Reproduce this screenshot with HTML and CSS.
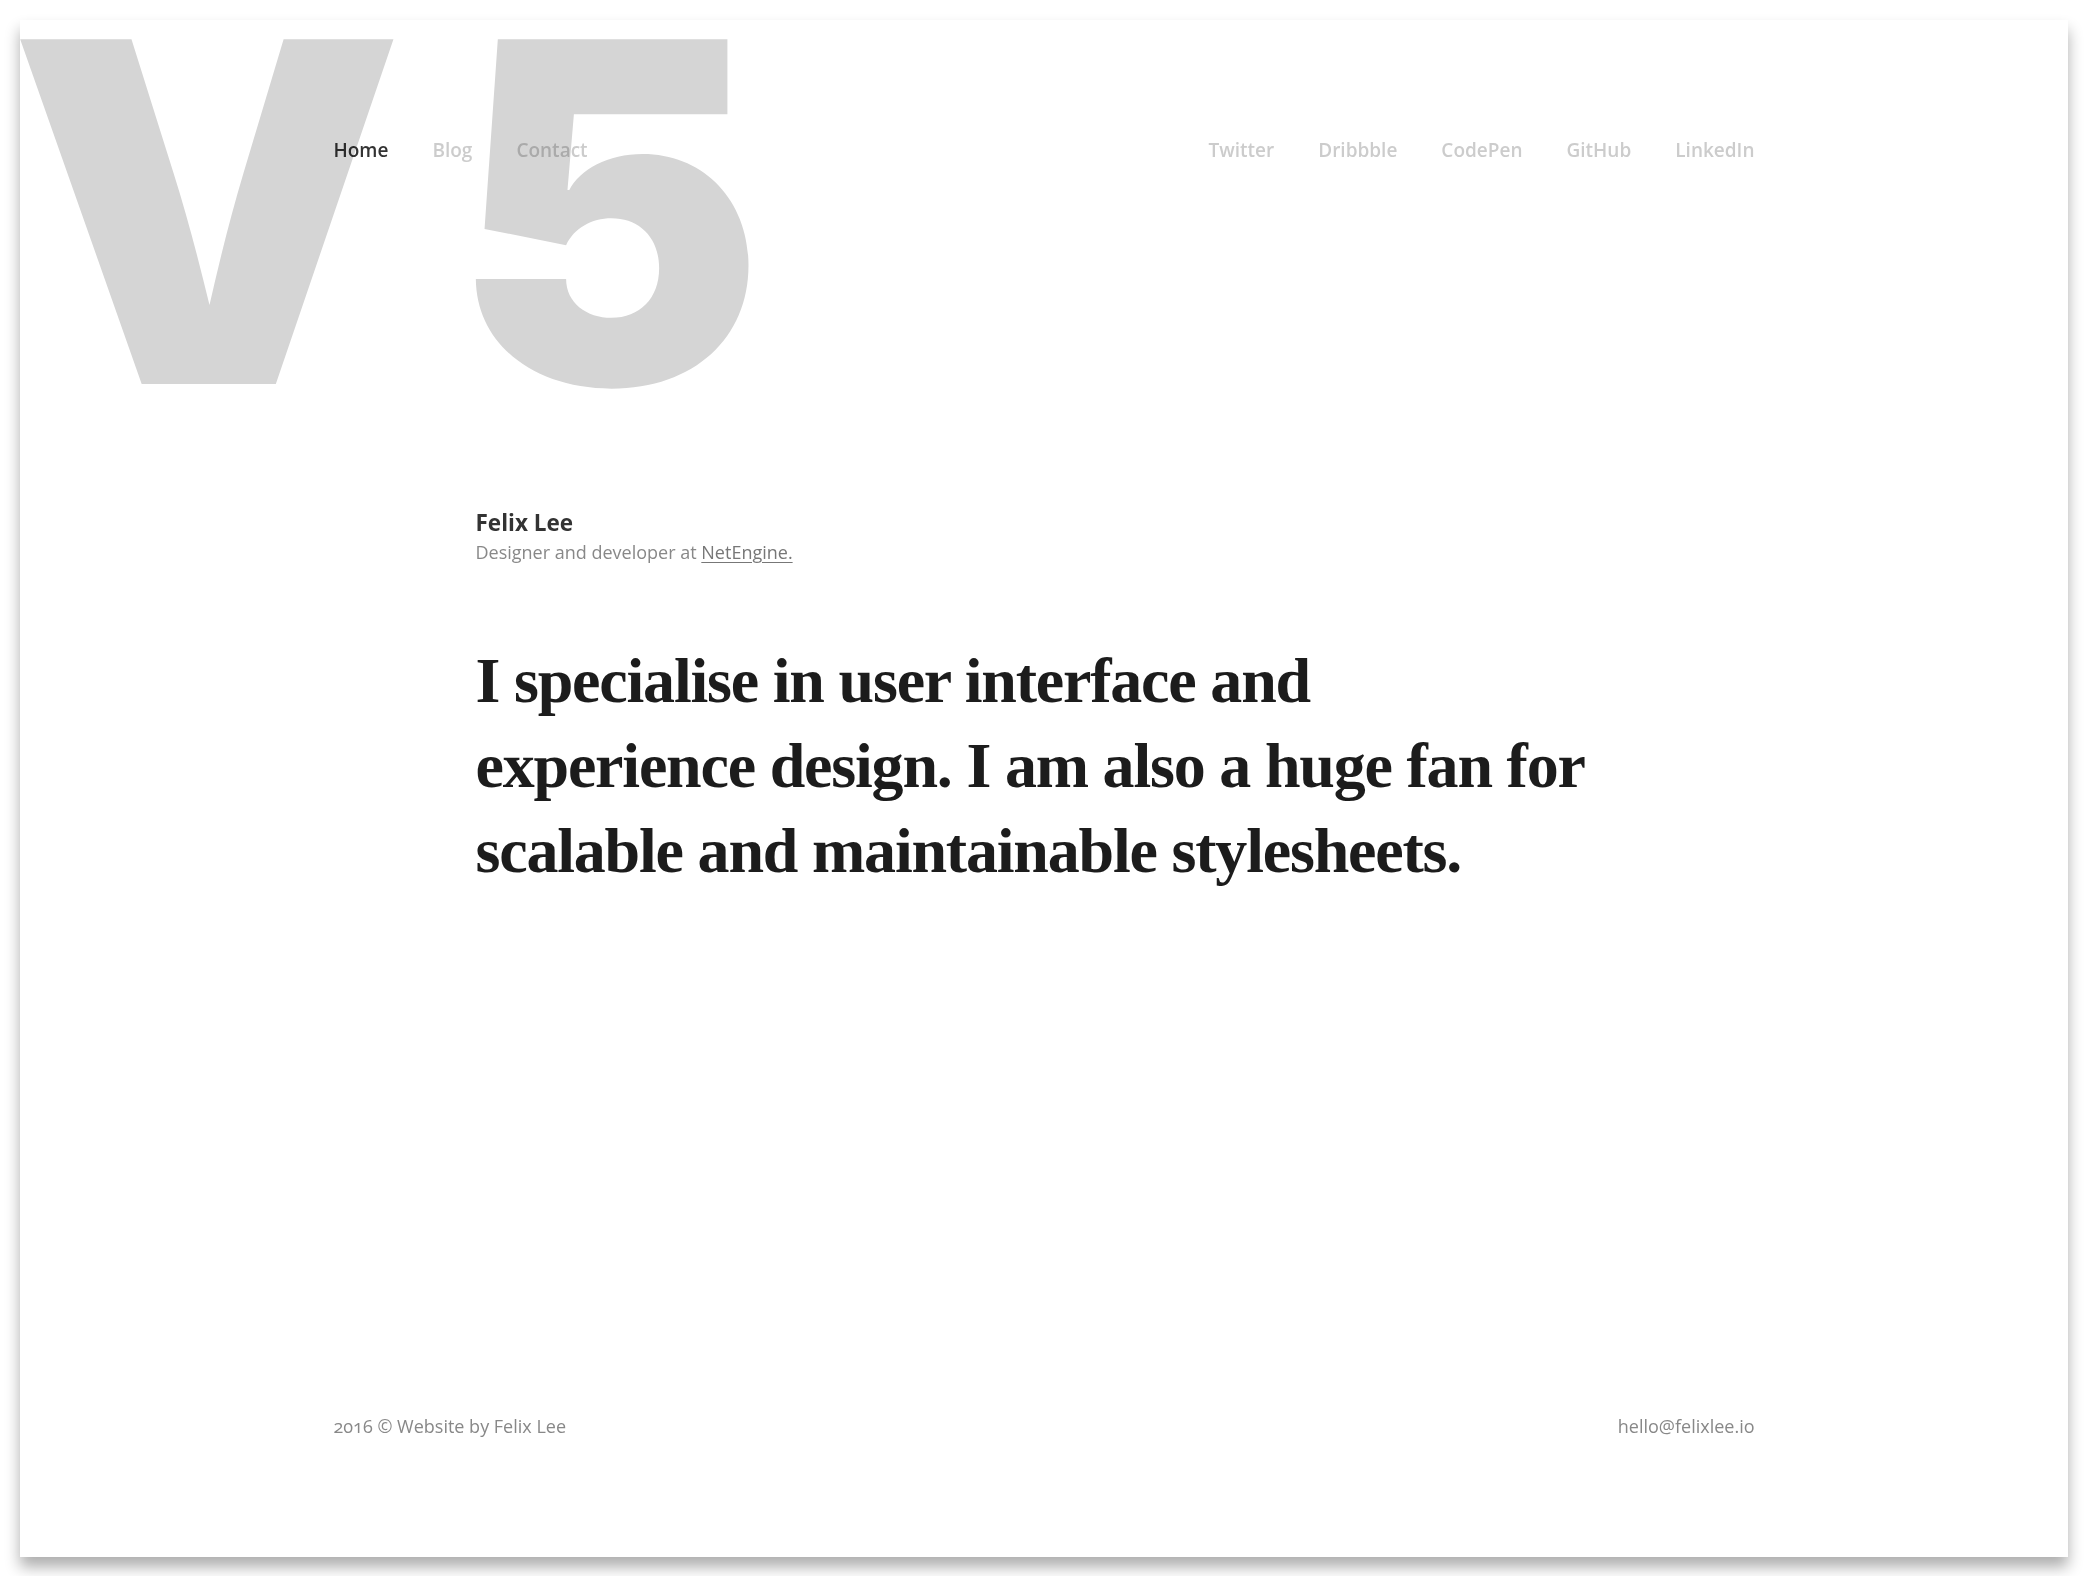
FILE: index.html
```html
<!DOCTYPE html>
<html lang="en">
<head>
<meta charset="utf-8">
<title>Felix Lee</title>
<link rel="stylesheet" href="styles.css">
</head>
<body>
<div class="page">
  <div class="mark" aria-hidden="true"><span class="mark-v">V</span><span class="mark-5">5</span></div>
  <div class="container">
    <header class="header">
      <nav class="nav">
        <a class="nav-link is-active" href="#">Home</a>
        <a class="nav-link" href="#">Blog</a>
        <a class="nav-link" href="#">Contact</a>
      </nav>
      <nav class="nav">
        <a class="nav-link" href="#">Twitter</a>
        <a class="nav-link" href="#">Dribbble</a>
        <a class="nav-link" href="#">CodePen</a>
        <a class="nav-link" href="#">GitHub</a>
        <a class="nav-link" href="#">LinkedIn</a>
      </nav>
    </header>
    <main class="main">
      <div class="intro">
        <h1 class="intro-name">Felix Lee</h1>
        <p class="intro-role">Designer and developer at <a href="#">NetEngine.</a></p>
      </div>
      <p class="lede">I specialise in user interface and<br>experience design. I am also a huge fan for<br>scalable and maintainable stylesheets.</p>
    </main>
    <footer class="footer">
      <span>2016 © Website by Felix Lee</span>
      <a href="#">hello@felixlee.io</a>
    </footer>
  </div>
</div>
</body>
</html>
```

FILE: styles.css
```css
html, body {
  margin: 0;
  padding: 0;
  background: #fff;
}

body {
  padding: 20px 20px 19px;
  font-family: "Open Sans", "Noto Sans", sans-serif;
  color: #333;
}

.page {
  position: relative;
  height: 1537px;
  overflow: hidden;
  background: #fff;
  box-shadow: 0 10px 14px rgba(0, 0, 0, 0.32);
}

.mark {
  position: absolute;
  top: 14px;
  left: -11px;
  font-family: Inter, "Liberation Sans", sans-serif;
  font-weight: 900;
  font-size: 474px;
  line-height: 0.75;
  color: #d5d5d5;
  white-space: nowrap;
}

.mark-v {
  display: inline-block;
  transform: scaleX(1.05);
  transform-origin: left center;
}

.mark-5 {
  display: inline-block;
  margin-left: 66px;
  transform: scaleX(0.99);
  transform-origin: left center;
}

.container {
  position: relative;
  width: 1421px;
  height: 100%;
  margin: 0 auto;
  display: flex;
  flex-direction: column;
}

.header {
  display: flex;
  justify-content: space-between;
  padding-top: 118px;
}

.nav {
  display: flex;
  gap: 44px;
}

.nav-link {
  font-size: 19px;
  line-height: 24px;
  font-weight: 600;
  color: #cccccc;
  text-decoration: none;
  mix-blend-mode: multiply;
}

.nav-link.is-active {
  color: #333;
}

.main {
  padding-left: 142px;
}

.intro {
  margin-top: 346px;
}

.intro-name {
  margin: 0;
  font-size: 22.5px;
  line-height: 30px;
  font-weight: 700;
  color: #333;
}

.intro-role {
  margin: 0;
  font-size: 18px;
  line-height: 28px;
  font-weight: 400;
  color: #888;
}

.intro-role a {
  color: #777;
  text-decoration: underline;
  text-underline-offset: 3px;
}

.lede {
  margin: 72px 0 0;
  font-family: "Liberation Serif", "Times New Roman", serif;
  font-weight: 700;
  font-size: 64px;
  line-height: 85px;
  letter-spacing: -1.2px;
  color: #1c1c1c;
}

.footer {
  margin-top: auto;
  padding-bottom: 119px;
  display: flex;
  justify-content: space-between;
  font-size: 18px;
  line-height: 24px;
  font-weight: 400;
  color: #888;
  font-variant-numeric: oldstyle-nums;
}

.footer a {
  color: #888;
  text-decoration: none;
}
```
